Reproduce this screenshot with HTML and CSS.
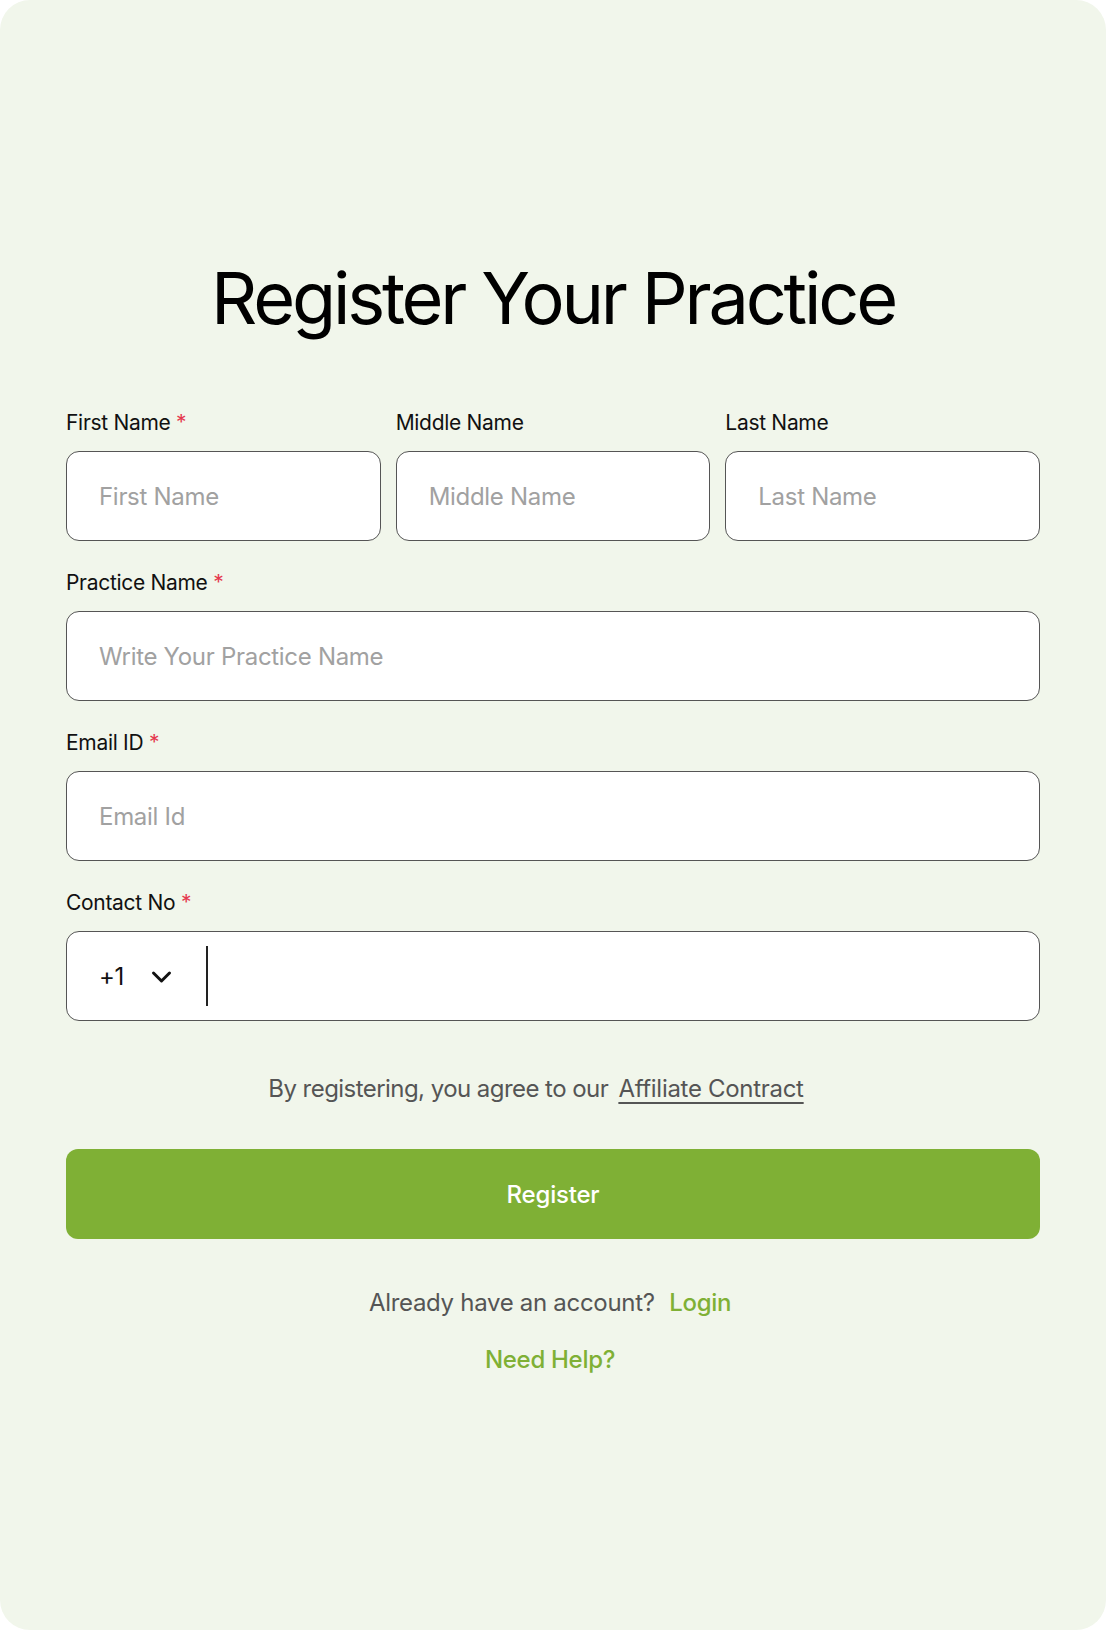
FILE: index.html
```html
<!DOCTYPE html>
<html lang="en">
<head>
<meta charset="utf-8">
<title>Register Your Practice</title>
<link rel="stylesheet" href="styles.css">
</head>
<body>
<main class="card">
  <h1 class="title">Register Your Practice</h1>
  <form class="form">
    <div class="row three">
      <div class="field">
        <label class="label">First Name <span class="req">*</span></label>
        <input class="input" type="text" placeholder="First Name">
      </div>
      <div class="field">
        <label class="label">Middle Name</label>
        <input class="input" type="text" placeholder="Middle Name">
      </div>
      <div class="field">
        <label class="label">Last Name</label>
        <input class="input" type="text" placeholder="Last Name">
      </div>
    </div>
    <div class="field">
      <label class="label">Practice Name <span class="req">*</span></label>
      <input class="input" type="text" placeholder="Write Your Practice Name">
    </div>
    <div class="field">
      <label class="label">Email ID <span class="req">*</span></label>
      <input class="input" type="email" placeholder="Email Id">
    </div>
    <div class="field">
      <label class="label">Contact No <span class="req">*</span></label>
      <div class="input phone">
        <span class="code">+1</span>
        <svg class="chev" width="21" height="14" viewBox="0 0 21 14" aria-hidden="true"><path d="M2.5 3 L10.5 11 L18.5 3" fill="none" stroke="#111" stroke-width="3" stroke-linecap="round" stroke-linejoin="round"/></svg>
        <span class="divider"></span>
        <input class="phone-input" type="tel">
      </div>
    </div>
    <p class="agree">By registering, you agree to our <a class="contract" href="#">Affiliate Contract</a></p>
    <button class="btn" type="button">Register</button>
    <p class="login">Already have an account? <a class="green" href="#">Login</a></p>
    <p class="help"><a class="green" href="#">Need Help?</a></p>
  </form>
</main>
</body>
</html>
```
FILE: styles.css
```css
html, body {
  margin: 0;
  padding: 0;
  background: #ffffff;
}
body {
  font-family: Inter, "Liberation Sans", sans-serif;
  color: #111;
}
.card {
  box-sizing: border-box;
  min-height: 1630px;
  background: #f1f6eb;
  border-radius: 30px;
  padding: 262px 66px 0;
}
.title {
  margin: 0 0 78px;
  font-size: 72px;
  line-height: 1;
  font-weight: 400;
  text-align: center;
  letter-spacing: -3.2px;
  color: #000;
}
.form {
  display: flex;
  flex-direction: column;
  gap: 31px;
}
.row.three {
  display: grid;
  grid-template-columns: repeat(3, 1fr);
  gap: 15px;
}
.field {
  display: flex;
  flex-direction: column;
  gap: 18px;
}
.label {
  font-size: 21px;
  line-height: 1;
  color: #111;
  letter-spacing: -0.3px;
}
.req {
  color: #e5394f;
}
.input {
  box-sizing: border-box;
  height: 90px;
  width: 100%;
  border: 1.6px solid #555555;
  border-radius: 13px;
  background: #fff;
  padding: 0 32px;
  font-family: inherit;
  font-size: 24px;
  color: #111;
  outline: none;
  letter-spacing: -0.3px;
}
.input::placeholder {
  color: #a1a1a1;
}
.phone {
  display: flex;
  align-items: center;
}
.code {
  font-size: 24px;
  color: #111;
}
.chev {
  margin-left: 27px;
  margin-top: 1px;
}
.divider {
  width: 1.6px;
  height: 60px;
  background: #222;
  margin-left: 34px;
}
.phone-input {
  flex: 1;
  border: 0;
  outline: none;
  background: transparent;
  height: 100%;
  font-family: inherit;
  font-size: 24px;
  padding: 0 20px;
}
.agree {
  margin: 25px 0 0;
  padding-right: 34px;
  text-align: center;
  font-size: 24px;
  line-height: 1;
  color: #555;
  letter-spacing: -0.55px;
}
.contract {
  color: #555;
  text-decoration: underline;
  text-underline-offset: 5px;
  text-decoration-thickness: 1.5px;
  margin-left: 4px;
  letter-spacing: -0.3px;
}
.btn {
  height: 90px;
  margin-top: 17px;
  border: 0;
  border-radius: 12px;
  background: #7fb035;
  color: #fff;
  font-family: inherit;
  font-size: 24px;
  font-weight: 500;
  letter-spacing: -0.2px;
}
.login {
  margin: 21px 0 0;
  padding-right: 6px;
  text-align: center;
  font-size: 24px;
  line-height: 1;
  color: #555;
  letter-spacing: -0.3px;
}
.green {
  color: #7fb035;
  text-decoration: none;
  margin-left: 8px;
  font-weight: 500;
}
.help {
  margin: 2px 0 0;
  padding-right: 6px;
  text-align: center;
  font-size: 24px;
  line-height: 1;
  letter-spacing: -0.3px;
}
.help .green {
  margin-left: 0;
}
```
